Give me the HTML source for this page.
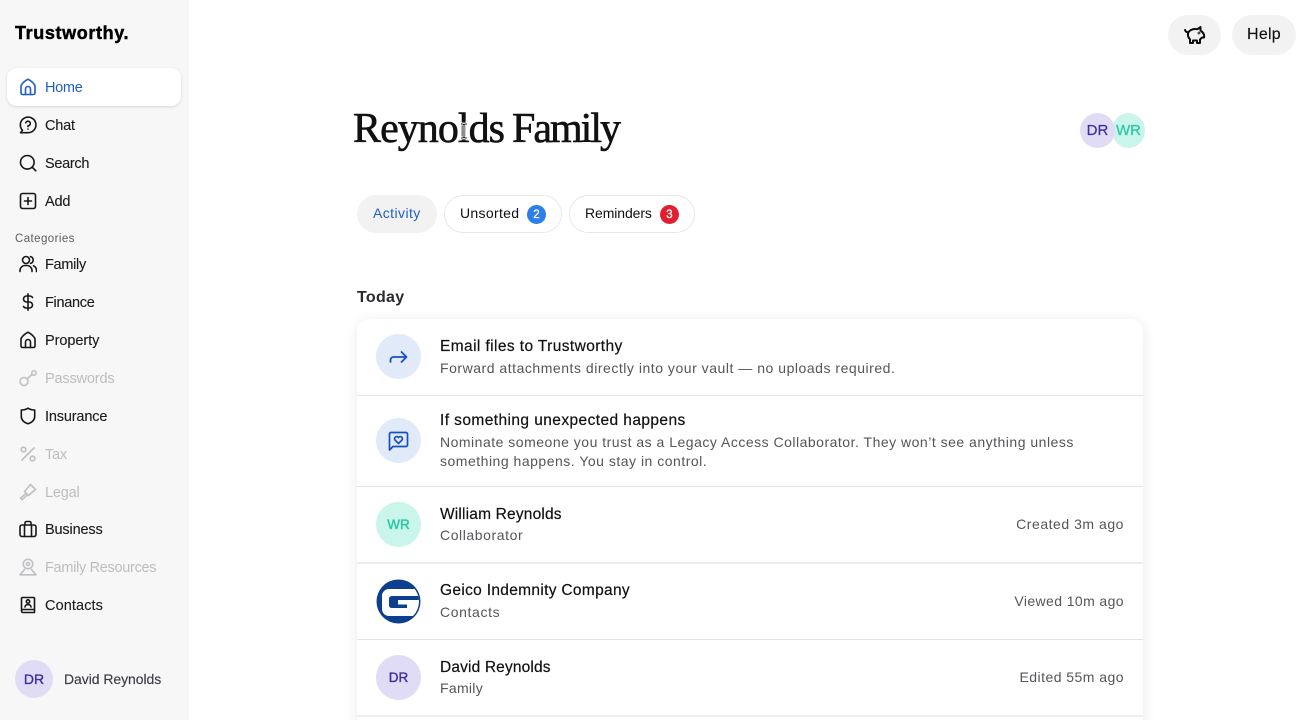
<!DOCTYPE html>
<html lang="en"><head><meta charset="utf-8"><title>Reynolds Family</title>
<style>
html{margin:0;padding:0;background:#fff;width:1311px;height:720px;overflow:hidden}
body{margin:0;padding:0;background:#fff;width:1311px;height:720px;overflow:hidden;position:relative;font-family:"Liberation Sans",sans-serif;color:#111}
.t{position:absolute;white-space:nowrap;line-height:20px}
.side{position:absolute;left:0;top:0;width:189px;height:720px;background:#f7f7f8}
.nav{font-size:14.5px;left:45px;letter-spacing:-.2px;color:#1c1c1f;-webkit-text-stroke:.12px #1c1c1f}
.nav.off{color:#bdbdc0;-webkit-text-stroke:0}
svg.i{position:absolute;left:19px;width:18px;height:18px;fill:none;stroke:#17171a;stroke-width:1.6;stroke-linecap:round;stroke-linejoin:round}
svg.off{stroke:#c0c0c3}
.act{position:absolute;left:7px;top:68px;width:174px;height:38px;background:#fff;border-radius:10px;box-shadow:0 1px 3px rgba(0,0,0,.13)}
.av{position:absolute;border-radius:50%;display:flex;align-items:center;justify-content:center;font-size:14px;-webkit-text-stroke:.35px currentColor}
.dr{background:#e1dcf5;color:#3f2da0}
.wr{background:#c9f5ea;color:#25c7a2}
.pill{position:absolute;top:195px;height:38px;border-radius:19px;box-sizing:border-box}
.card{position:absolute;left:357px;top:319px;width:786px;height:420px;background:#fff;border-radius:12px;box-shadow:0 2px 14px rgba(0,0,0,.09)}
.ln{position:absolute;left:357px;width:786px;height:1px;background:#e4e4e6}
.h{font-size:15.5px;left:440px;letter-spacing:.36px;color:#111;-webkit-text-stroke:.2px #111}
.s{font-size:14px;left:440px;letter-spacing:.5px;color:#55555a}
.r{font-size:14px;right:187px;letter-spacing:.46px;color:#55555a}
.ic{position:absolute;left:376px;width:45px;height:45px;border-radius:50%;background:#e1eaf8}
.ti{font-family:'Liberation Serif',serif;font-size:42px;line-height:48px;color:#111;-webkit-text-stroke:.6px #111;top:105px}
</style></head><body>
<div class="side"></div>
<div class="t" style="left:15px;top:23px;font-size:18px;font-weight:700;color:#000;letter-spacing:.62px;-webkit-text-stroke:.45px #000">Trustworthy.</div>
<div class="act"></div>

<svg class="i" style="top:78px;stroke:#1f5fbf" viewBox="0 0 18 18"><path d="M2 7.500C3.500 5 6 2.800 9 1.200c3 1.600 5.500 3.800 7 6.300v7.500a1.500 1.500 0 0 1-1.500 1.500h-11A1.500 1.500 0 0 1 2 15z"/><path d="M6.500 16.500V11a2.500 2.500 0 0 1 5 0v5.500"/></svg>
<div class="t nav" style="top:78px;color:#1f5fbf;-webkit-text-stroke:0;letter-spacing:-.3px">Home</div>

<svg class="i" style="top:116px" viewBox="0 0 18 18"><path d="M1.500 16.700l2-2.400A7.800 7.800 0 1 1 9 16.700z"/><path d="M6.800 6.800A2.300 2.300 0 1 1 9 9.800v.8M9 13v.1"/></svg>
<div class="t nav" style="top:116px">Chat</div>

<svg class="i" style="top:154px" viewBox="0 0 18 18"><circle cx="8.300" cy="8.300" r="6.800"/><path d="M13.300 13.300l3.500 3.500"/></svg>
<div class="t nav" style="top:154px;letter-spacing:-.3px">Search</div>

<svg class="i" style="top:192px" viewBox="0 0 18 18"><rect x="1.500" y="1.500" width="15" height="15" rx="2"/><path d="M9 5.500v7M5.500 9h7"/></svg>
<div class="t nav" style="top:192px">Add</div>

<div class="t" style="left:15px;top:229px;font-size:11.500px;letter-spacing:.42px;color:#5e5e63">Categories</div>

<svg class="i" style="top:255px" viewBox="0 0 18 18"><circle cx="7" cy="5" r="3.500"/><path d="M1 16.500v-1.500a5 5 0 0 1 5-4.500h2a5 5 0 0 1 5 4.500v1.500M11.500 1.600a3.500 3.500 0 0 1 0 6.800M14.500 10.800a5 5 0 0 1 3 4.200v1.500"/></svg>
<div class="t nav" style="top:255px;letter-spacing:-.3px">Family</div>

<svg class="i" style="top:293px" viewBox="0 0 18 18"><path d="M9 .8v16.400M13.500 4.500A3.500 3.500 0 0 0 10.500 3h-3a3 3 0 0 0 0 6h3a3 3 0 0 1 0 6h-3a3.500 3.500 0 0 1-3-1.500"/></svg>
<div class="t nav" style="top:293px;letter-spacing:-.3px">Finance</div>

<svg class="i" style="top:331px" viewBox="0 0 18 18"><path d="M2 7.500C3.500 5 6 2.800 9 1.200c3 1.600 5.500 3.800 7 6.300v7.500a1.500 1.500 0 0 1-1.500 1.500h-11A1.500 1.500 0 0 1 2 15z"/><path d="M6.500 16.500V11a2.500 2.500 0 0 1 5 0v5.500"/></svg>
<div class="t nav" style="top:331px;letter-spacing:-.06px">Property</div>

<svg class="i off" style="top:369px" viewBox="0 0 18 18"><circle cx="5" cy="12.500" r="4"/><path d="M8 10l5-4.500"/><circle cx="15" cy="4" r="2.200"/></svg>
<div class="t nav off" style="top:369px;letter-spacing:-.16px">Passwords</div>

<svg class="i" style="top:407px" viewBox="0 0 18 18"><path d="M9 1.200c2 1.300 4.300 1.800 6.700 1.800v6.500c0 3.800-3 6-6.700 7.300-3.700-1.300-6.700-3.500-6.700-7.300V3c2.400 0 4.700-.5 6.700-1.800z"/></svg>
<div class="t nav" style="top:407px;letter-spacing:-.16px">Insurance</div>

<svg class="i off" style="top:445px" viewBox="0 0 18 18"><path d="M15 3L3 15"/><circle cx="4.500" cy="4.500" r="2.300"/><circle cx="13.500" cy="13.500" r="2.300"/></svg>
<div class="t nav off" style="top:445px">Tax</div>

<svg class="i off" style="top:483px" viewBox="0 0 18 18"><path d="M11.500 1.500l5 5-7 6-4-4z"/><path d="M7 10.500l-5.500 4.500 1.500 1.800 5.500-5"/></svg>
<div class="t nav off" style="top:483px">Legal</div>

<svg class="i" style="top:520px" viewBox="0 0 18 18"><rect x="1" y="5" width="16" height="11.500" rx="2"/><path d="M5.500 5v11.500M12.500 5v11.500M6 5V3a1.500 1.500 0 0 1 1.500-1.500h3A1.500 1.500 0 0 1 12 3v2"/></svg>
<div class="t nav" style="top:520px;letter-spacing:-.16px">Business</div>

<svg class="i off" style="top:558px" viewBox="0 0 18 18"><circle cx="9" cy="6" r="4.700"/><circle cx="9" cy="6" r="1.500"/><path d="M5.500 11.500L1 16.800h16l-4.500-5.300"/></svg>
<div class="t nav off" style="top:558px;letter-spacing:-.3px">Family Resources</div>

<svg class="i" style="top:596px" viewBox="0 0 18 18"><path d="M2.500 15V2.500a1 1 0 0 1 1-1h11a1 1 0 0 1 1 1v11H4a1.500 1.500 0 0 0-1.500 1.500A1.500 1.500 0 0 0 4 16.500h11.500v-3"/><circle cx="9" cy="5.500" r="1.700"/><path d="M6 11c0-3.200 6-3.200 6 0"/></svg>
<div class="t nav" style="top:596px;letter-spacing:.1px">Contacts</div>

<div class="av dr" style="left:15px;top:660px;width:38px;height:38px;font-size:14px">DR</div>
<div class="t" style="left:64px;top:669px;font-size:14px;letter-spacing:-.06px;color:#3c3c44;-webkit-text-stroke:.15px #3c3c44">David Reynolds</div>

<!-- Top right -->
<div style="position:absolute;left:1168px;top:15px;width:53px;height:40px;border-radius:20px;background:#f2f2f3"></div>
<svg style="position:absolute;left:1184px;top:25px;width:22px;height:20px;fill:none;stroke:#0c0c0c;stroke-width:2;stroke-linejoin:round;stroke-linecap:round" viewBox="0 0 22 20"><path d="M1 5c.6 1.600 1.700 2.300 3.300 2.300"/><path d="M5 6.500C7 4.300 10.500 3.500 13.500 4.200L16.500 2v3.500c1.500 1 3 2.500 3.600 4.500v2.500h-2L16 14.500V18h-3v-2.500H9V18H6v-3.800C3.500 12 3.300 8.500 5 6.500z"/><circle cx="15" cy="8" r=".4"/></svg>
<div style="position:absolute;left:1232px;top:15px;width:64px;height:40px;border-radius:20px;background:#f2f2f3"></div>
<div class="t" style="left:1247px;top:25px;font-size:16px;letter-spacing:.26px;color:#111;-webkit-text-stroke:.15px #111">Help</div>

<!-- Header -->
<div class="t ti" style="left:353px;letter-spacing:-.95px">Reynolds</div>
<div class="t ti" style="left:512px;letter-spacing:-2px">Family</div>
<div class="av wr" style="left:1112px;top:113px;width:33px;height:35px;font-size:15px;-webkit-text-stroke:.2px currentColor">WR</div>
<div class="av dr" style="left:1080px;top:113px;width:35px;height:35px;font-size:15px;-webkit-text-stroke:.2px currentColor">DR</div>
<svg style="position:absolute;left:459px;top:122px;width:10px;height:18px" viewBox="0 0 10 18"><path d="M2 2h2l1 1 1-1h2M5 3v12M2 16h2l1-1 1 1h2" fill="none" stroke="#fff" stroke-width="3"/><path d="M2 2h2l1 1 1-1h2M5 3v12M2 16h2l1-1 1 1h2" fill="none" stroke="#222" stroke-width="1"/></svg>

<!-- Tabs -->
<div class="pill" style="left:357px;width:80px;background:#f2f2f3"></div>
<div class="t" style="left:373px;top:203px;font-size:14px;letter-spacing:.42px;color:#1f5fbf">Activity</div>
<div class="pill" style="left:444px;width:118px;border:1px solid #e8e8ea"></div>
<div class="t" style="left:460px;top:203px;font-size:14px;letter-spacing:.32px;color:#111">Unsorted</div>
<div class="av" style="left:527px;top:205px;width:19px;height:19px;background:#2b7fe6;color:#fff;font-size:11.500px;-webkit-text-stroke:.3px #fff">2</div>
<div class="pill" style="left:569px;width:126px;border:1px solid #e8e8ea"></div>
<div class="t" style="left:585px;top:203px;font-size:14px;letter-spacing:-.1px;color:#111">Reminders</div>
<div class="av" style="left:660px;top:205px;width:19px;height:19px;background:#e01f30;color:#fff;font-size:11.500px;-webkit-text-stroke:.3px #fff">3</div>

<div class="t" style="left:357px;top:288px;font-size:16px;font-weight:700;letter-spacing:.3px;color:#2a2a2e">Today</div>

<!-- Card -->
<div class="card"></div>
<div class="ln" style="top:395px"></div>
<div class="ln" style="top:486px"></div>
<div class="ln" style="top:562px;height:2px;background:#ececee"></div>
<div class="ln" style="top:639px"></div>
<div class="ln" style="top:715px;height:2px;background:#efeff0"></div>

<div class="ic" style="top:334px"></div>
<svg style="position:absolute;left:389px;top:350px;width:20px;height:14px;fill:none;stroke:#1a4fc0;stroke-width:1.800;stroke-linecap:round;stroke-linejoin:round" viewBox="0 0 20 14"><path d="M1.500 12V10a3 3 0 0 1 3-3h13M12.500 2l5 5-5 5"/></svg>
<div class="t h" style="top:337px;letter-spacing:.4px">Email files to Trustworthy</div>
<div class="t s" style="top:358px;letter-spacing:.525px">Forward attachments directly into your vault — no uploads required.</div>

<div class="ic" style="top:418px"></div>
<svg style="position:absolute;left:388px;top:431px;width:21px;height:21px;fill:none;stroke:#1a4fc0;stroke-width:1.700;stroke-linecap:round;stroke-linejoin:round" viewBox="0 0 21 21"><path d="M1.500 19V3a1.500 1.500 0 0 1 1.500-1.500h15A1.500 1.500 0 0 1 19.500 3v11a1.500 1.500 0 0 1-1.500 1.500H5z"/><path d="M10.500 12.500L7.200 9.200a2.100 2.100 0 0 1 3-3l.3.300.3-.3a2.100 2.100 0 0 1 3 3z"/></svg>
<div class="t h" style="top:411px;letter-spacing:.42px">If something unexpected happens</div>
<div class="t s" style="top:432px;letter-spacing:.5px">Nominate someone you trust as a Legacy Access Collaborator. They won’t see anything unless</div>
<div class="t s" style="top:451px;letter-spacing:.505px">something happens. You stay in control.</div>

<div class="av wr" style="left:376px;top:502px;width:45px;height:45px;font-size:13.5px">WR</div>
<div class="t h" style="top:505px;letter-spacing:.18px">William Reynolds</div>
<div class="t s" style="top:525px;letter-spacing:.58px">Collaborator</div>
<div class="t r" style="top:514px;letter-spacing:.53px">Created 3m ago</div>

<svg style="position:absolute;left:376px;top:579px;width:45px;height:45px" viewBox="0 0 45 45"><defs><clipPath id="g"><circle cx="22.500" cy="22.500" r="20.500"/></clipPath></defs><circle cx="22.500" cy="22.500" r="22" fill="#0d3f8f"/><rect clip-path="url(#g)" x="6" y="10" width="39" height="27" rx="7" fill="#fff"/><path clip-path="url(#g)" d="M45 17H16q-3 0-3 3v6q0 3 3 3H31V25.500H22V21H45z" fill="#0d3f8f"/></svg>
<div class="t h" style="top:581px;letter-spacing:.32px">Geico Indemnity Company</div>
<div class="t s" style="top:602px;letter-spacing:.62px">Contacts</div>
<div class="t r" style="top:591px;letter-spacing:.4px">Viewed 10m ago</div>

<div class="av dr" style="left:376px;top:655px;width:45px;height:45px;font-size:13.5px">DR</div>
<div class="t h" style="top:658px;letter-spacing:.15px">David Reynolds</div>
<div class="t s" style="top:678px;letter-spacing:.3px">Family</div>
<div class="t r" style="top:667px">Edited 55m ago</div>
</body></html>
